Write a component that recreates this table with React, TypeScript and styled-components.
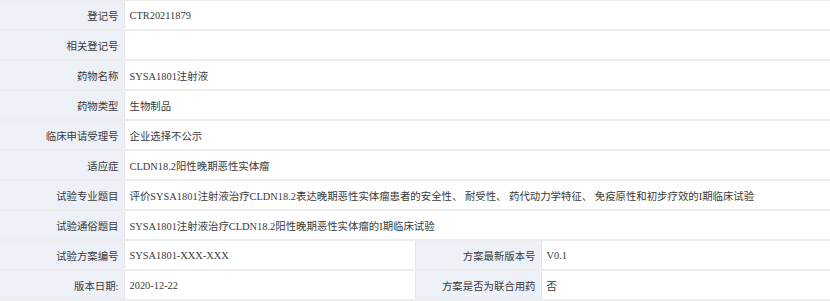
import styled, { createGlobalStyle } from "styled-components";

const GlobalStyle = createGlobalStyle`
    body {
        margin: 0;
        background: #fff;
        font-family: "Liberation Serif", "Noto Sans CJK SC", serif;
    }
`

const Table = styled.table`
    width: 830px;
    border-collapse: collapse;
    table-layout: fixed;
    margin-top: -1px;
    font-size: 10.4px;
    color: #3a3a3a;
`

const Row = styled.tr`
    height: 30px;
    border-top: 2px solid #ededed;
    border-bottom: 2px solid #ededed;
`

const Label = styled.th<{ $inner?: boolean }>`
    background: #eef0f8;
    font-weight: normal;
    text-align: right;
    padding: 0 5px 0 0;
    border-right: 1px solid #e3e5ee;
    border-left: ${(p) => (p.$inner ? "1px solid #e3e5ee" : "none")};
    white-space: nowrap;
`

const Value = styled.td`
    padding: 0 0 0 5px;
    text-align: left;
    white-space: nowrap;
`

type Item = { label: string; value: string };

const fullRows: Item[] = [
    { label: "登记号", value: "CTR20211879" },
    { label: "相关登记号", value: "" },
    { label: "药物名称", value: "SYSA1801注射液" },
    { label: "药物类型", value: "生物制品" },
    { label: "临床申请受理号", value: "企业选择不公示" },
    { label: "适应症", value: "CLDN18.2阳性晚期恶性实体瘤" },
    { label: "试验专业题目", value: "评价SYSA1801注射液治疗CLDN18.2表达晚期恶性实体瘤患者的安全性、 耐受性、 药代动力学特征、 免疫原性和初步疗效的I期临床试验" },
    { label: "试验通俗题目", value: "SYSA1801注射液治疗CLDN18.2阳性晚期恶性实体瘤的I期临床试验" },
]

const pairRows: [Item, Item][] = [
    [{ label: "试验方案编号", value: "SYSA1801-XXX-XXX" }, { label: "方案最新版本号", value: "V0.1" }],
    [{ label: "版本日期:", value: "2020-12-22" }, { label: "方案是否为联合用药", value: "否" }],
]

export default function App() {
    return (
        <>
            <GlobalStyle />
            <Table>
                <colgroup>
                    <col style={{ width: 124 }} />
                    <col style={{ width: 291 }} />
                    <col style={{ width: 126 }} />
                    <col />
                </colgroup>
                <tbody>
                    {fullRows.map((r) => (
                        <Row key={r.label}>
                            <Label>{r.label}</Label>
                            <Value colSpan={3}>{r.value}</Value>
                        </Row>
                    ))}
                    {pairRows.map(([a, b]) => (
                        <Row key={a.label}>
                            <Label>{a.label}</Label>
                            <Value>{a.value}</Value>
                            <Label $inner>{b.label}</Label>
                            <Value>{b.value}</Value>
                        </Row>
                    ))}
                </tbody>
            </Table>
        </>
    )
}
